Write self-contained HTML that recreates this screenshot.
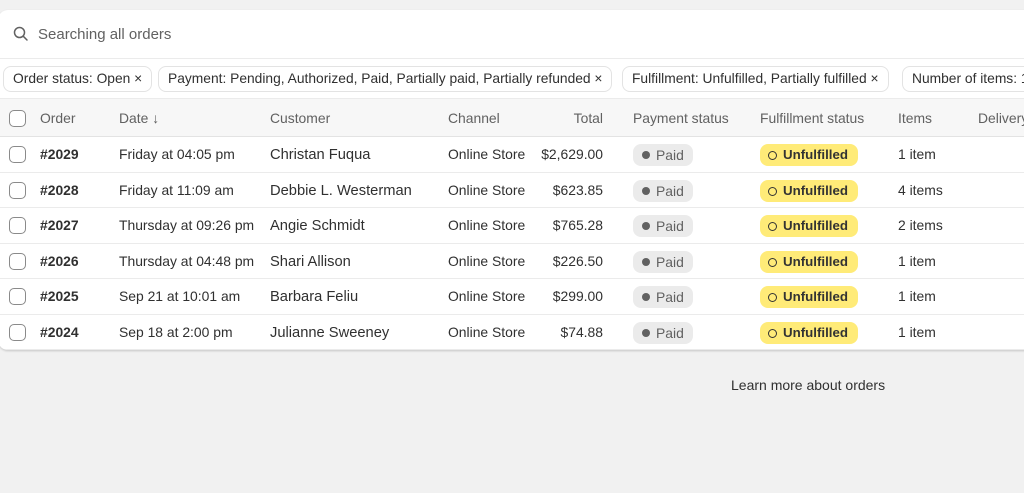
<!DOCTYPE html>
<html><head><style>
*{box-sizing:border-box;margin:0;padding:0}
body{width:1024px;height:493px;background:#f1f1f1;font-family:"Liberation Sans",sans-serif;color:#303030;position:relative;overflow:hidden;font-size:13.9px}
.card{position:absolute;left:-2px;top:10px;width:1040px;height:340px;background:#fff;border-radius:10px;box-shadow:0 1px 2px rgba(0,0,0,.18);overflow:hidden}
.search{position:absolute;left:2px;top:0;width:1040px;height:48px;}
.search span{position:absolute;left:38px;top:16px;font-size:15px;color:#616161}
.chip{position:absolute;top:56px;height:26px;border:1px solid #e3e3e3;border-radius:8px;padding:0 9px;line-height:24px;font-size:13.8px;color:#303030;white-space:nowrap;background:#fff}
.hdr{position:absolute;left:0;top:88px;width:1040px;height:39px;background:#f7f7f7;border-top:1px solid #ebebeb;border-bottom:1px solid #e3e3e3}
.t{position:absolute;white-space:nowrap}
.h{color:#616161;font-size:13.9px}
.row{position:absolute;left:0;width:1040px;height:35.5px;border-bottom:1px solid #ebebeb}
.cb{position:absolute;left:11px;width:17px;height:17px;border:1px solid #8a8a8a;border-radius:5px;background:#fff}
.paid{position:absolute;left:635px;width:60px;height:22px;background:#ebebeb;border-radius:8px;font-size:13.9px;color:#616161;line-height:22px;padding-left:23px}
.paid:before{content:"";position:absolute;left:9px;top:7px;width:8px;height:8px;border-radius:50%;background:#616161}
.unf{position:absolute;left:762px;width:98px;height:22px;background:#ffeb78;border-radius:8px;font-size:13.3px;line-height:22px;padding-left:23px;font-weight:bold;color:#333}
.unf:before{content:"";position:absolute;left:8px;top:7px;width:7px;height:7px;border-radius:50%;border:1.7px solid #333}
</style></head><body>
<div class="card">
 <div class="search">
  <svg style="position:absolute;left:13px;top:16px" width="16" height="16" viewBox="0 0 16 16"><circle cx="6.5" cy="6.5" r="5" fill="none" stroke="#616161" stroke-width="1.5"/><line x1="10.2" y1="10.2" x2="14" y2="14" stroke="#616161" stroke-width="1.5" stroke-linecap="round"/></svg>
  <span>Searching all orders</span>
 </div>
 <div style="position:absolute;left:0;top:48px;width:1040px;height:1px;background:#ebebeb"></div>
 <div class="chip" style="left:5px">Order status: Open ×</div>
 <div class="chip" style="left:160px">Payment: Pending, Authorized, Paid, Partially paid, Partially refunded ×</div>
 <div class="chip" style="left:624px">Fulfillment: Unfulfilled, Partially fulfilled ×</div>
 <div class="chip" style="left:904px">Number of items: 1</div>
 <div class="hdr">
  <div class="cb" style="top:11px"></div>
  <div class="t h" style="left:42px;top:11px">Order</div>
  <div class="t h" style="left:121px;top:11px">Date ↓</div>
  <div class="t h" style="left:272px;top:11px">Customer</div>
  <div class="t h" style="left:450px;top:11px">Channel</div>
  <div class="t h" style="left:545px;width:60px;text-align:right;top:11px">Total</div>
  <div class="t h" style="left:635px;top:11px">Payment status</div>
  <div class="t h" style="left:762px;top:11px">Fulfillment status</div>
  <div class="t h" style="left:900px;top:11px">Items</div>
  <div class="t h" style="left:980px;top:11px">Delivery</div>
 </div>
 <div id="rows"></div>
</div>
<div class="t" style="left:731px;top:377px;font-size:14px;color:#303030">Learn more about orders</div>
<script>
var d=[["#2029","Friday at 04:05 pm","Christan Fuqua","$2,629.00","1 item"],["#2028","Friday at 11:09 am","Debbie L. Westerman","$623.85","4 items"],["#2027","Thursday at 09:26 pm","Angie Schmidt","$765.28","2 items"],["#2026","Thursday at 04:48 pm","Shari Allison","$226.50","1 item"],["#2025","Sep 21 at 10:01 am","Barbara Feliu","$299.00","1 item"],["#2024","Sep 18 at 2:00 pm","Julianne Sweeney","$74.88","1 item"]];
var h="";d.forEach(function(r,i){var top=127+i*35.5;h+='<div class="row" style="top:'+top+'px"><div class="cb" style="top:9px"></div><div class="t" style="left:42px;top:9px;font-weight:bold">'+r[0]+'</div><div class="t" style="left:121px;top:9px">'+r[1]+'</div><div class="t" style="left:272px;top:10px;font-size:14.7px">'+r[2]+'</div><div class="t" style="left:450px;top:9px">Online Store</div><div class="t" style="left:505px;width:100px;text-align:right;top:9px">'+r[3]+'</div><div class="paid" style="top:7px">Paid</div><div class="unf" style="top:7px">Unfulfilled</div><div class="t" style="left:900px;top:9px">'+r[4]+'</div></div>';});
document.getElementById("rows").innerHTML=h;
</script>
</body></html>
